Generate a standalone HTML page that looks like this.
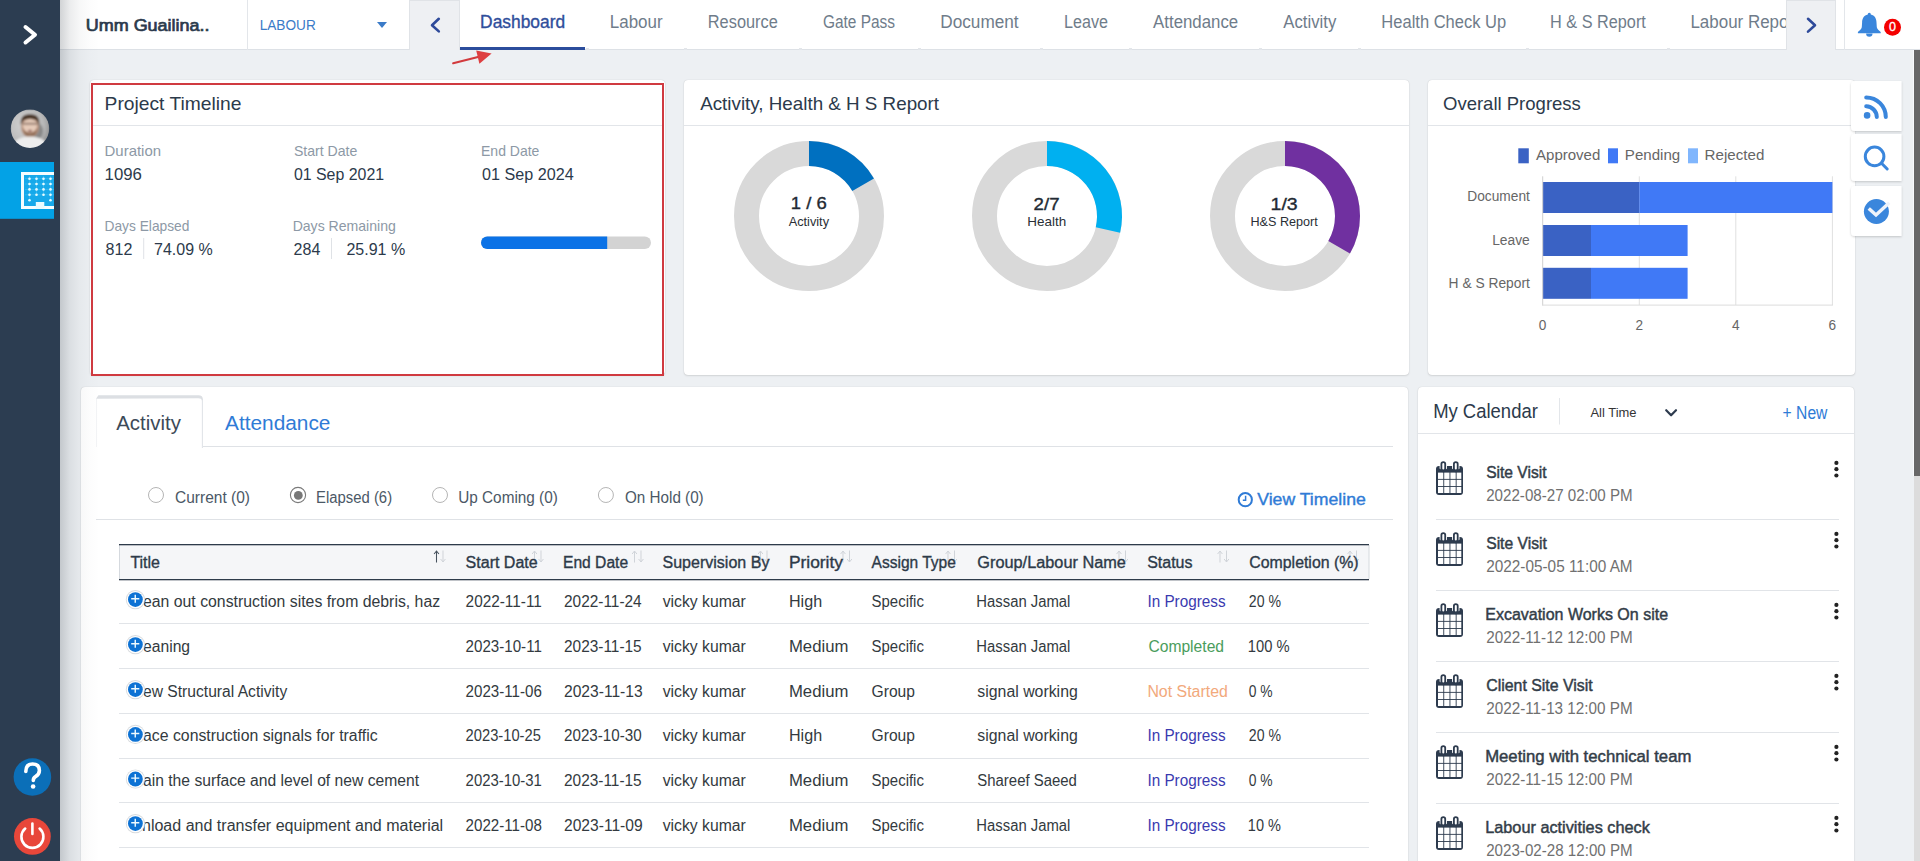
<!DOCTYPE html>
<html>
<head>
<meta charset="utf-8">
<title>Dashboard</title>
<style>
html,body{margin:0;padding:0;}
body{width:1920px;height:861px;overflow:hidden;background:#edf0f3;position:relative;font-family:"Liberation Sans",sans-serif;}
.a{position:absolute;box-sizing:border-box;}
.card{position:absolute;background:#fff;border-radius:4px;box-shadow:0 0 1px rgba(0,0,0,0.20),0 1px 2px rgba(0,0,0,0.10);}
svg{position:absolute;left:0;top:0;overflow:visible;}
svg text{font-family:"Liberation Sans",sans-serif;}
</style>
</head>
<body>
<!-- sidebar -->
<div class="a" style="left:0;top:0;width:60px;height:861px;background:#2c3d51;"></div>
<!-- left shadow over content -->
<div class="a" style="left:60px;top:0;width:40px;height:861px;background:linear-gradient(to right,rgba(40,50,60,0.21),rgba(40,50,60,0.09) 25%,rgba(40,50,60,0.035) 50%,rgba(40,50,60,0.012) 75%,rgba(40,50,60,0));z-index:5;"></div>

<!-- header -->
<div class="a" style="left:60px;top:0;width:1860px;height:50px;background:#fff;border-bottom:1px solid #dde1e6;"></div>
<div class="a" style="left:247px;top:0;width:1px;height:50px;background:#e3e6ea;"></div>
<div class="a" style="left:409px;top:0;width:51px;height:50px;background:#eef0f3;border:1px solid #e0e3e7;border-bottom:none;"></div>
<div class="a" style="left:460px;top:47px;width:125px;height:3px;background:#2b4d9c;"></div>
<div class="a" style="left:1844px;top:0;width:1px;height:50px;background:#e3e6ea;"></div>

<!-- top cards -->
<div class="card" style="left:90px;top:80px;width:575px;height:295px;"></div>
<div class="a" style="left:93px;top:125px;width:570px;height:1px;background:#e2e5e9;"></div>
<div class="card" style="left:684px;top:80px;width:725px;height:295px;"></div>
<div class="a" style="left:684px;top:125px;width:725px;height:1px;background:#e2e5e9;"></div>
<div class="card" style="left:1428px;top:80px;width:427px;height:295px;"></div>
<div class="a" style="left:1428px;top:125px;width:427px;height:1px;background:#e2e5e9;"></div>

<!-- bottom cards -->
<div class="card" style="left:81px;top:387px;width:1327px;height:500px;"></div>
<div class="card" style="left:1418px;top:387px;width:436px;height:500px;"></div>
<div class="a" style="left:1418px;top:433px;width:436px;height:1px;background:#e2e5e9;"></div>

<!-- ===== graphics layer ===== -->
<svg width="1920" height="861" viewBox="0 0 1920 861" style="z-index:2">
  <!-- sidebar chevron -->
  <polyline points="25.5,27 35,34.7 25.5,42.5" fill="none" stroke="#fff" stroke-width="4" stroke-linecap="round" stroke-linejoin="round"/>
  <!-- avatar -->
  <defs>
    <radialGradient id="avbg" cx="35%" cy="40%" r="70%">
      <stop offset="0" stop-color="#d2d2d2"/><stop offset="0.7" stop-color="#b9b9b9"/><stop offset="1" stop-color="#8d8d8d"/>
    </radialGradient>
    <filter id="bblur" x="-10%" y="-10%" width="120%" height="120%"><feGaussianBlur stdDeviation="0.45"/></filter>
    <filter id="avblur" x="-10%" y="-10%" width="120%" height="120%"><feGaussianBlur stdDeviation="0.85"/></filter>
    <clipPath id="avclip"><circle cx="30" cy="128.7" r="19.2"/></clipPath>
  </defs>
  <g clip-path="url(#avclip)">
    <g filter="url(#avblur)">
    <rect x="10" y="109" width="40" height="40" fill="url(#avbg)"/>
    <ellipse cx="37" cy="131" rx="6" ry="8" fill="#555" opacity="0.5"/>
    <ellipse cx="30" cy="127" rx="9" ry="10.5" fill="#b8927c"/>
    <ellipse cx="30" cy="125.5" rx="7.2" ry="7" fill="#e6cbb9"/>
    <path d="M20.8,125 Q19.8,113.8 30,114.2 Q40.2,113.8 39.2,125 Q38,118.6 30,118.9 Q22,118.6 20.8,125Z" fill="#4a3628"/>
    <path d="M22.8,128 Q23.5,136.5 30,137 Q36.5,136.5 37.2,128 Q35,132.5 30,132.8 Q25,132.5 22.8,128Z" fill="#8a6650" opacity="0.8"/>
    <rect x="22.5" y="122.6" width="15" height="2.4" fill="#6f5a4e" opacity="0.55"/>
    <ellipse cx="30" cy="130.8" rx="2.2" ry="1" fill="#6a3030" opacity="0.7"/>
    <ellipse cx="30" cy="151" rx="20" ry="14.5" fill="#ededed"/>
    </g>
  </g>
  <!-- active module -->
  <rect x="0" y="162" width="54" height="56.8" fill="#03a2e6"/>
  <g filter="url(#bblur)">
    <rect x="24" y="175" width="30" height="32" fill="#13a9ea"/>
    <g stroke="#4fc2f1" stroke-width="0.7" opacity="0.8">
      <line x1="25" y1="178.7" x2="54" y2="178.7"/><line x1="25" y1="184" x2="54" y2="184"/><line x1="25" y1="189.4" x2="54" y2="189.4"/><line x1="25" y1="194.8" x2="54" y2="194.8"/>
      <line x1="29.5" y1="176" x2="29.5" y2="201"/><line x1="36.5" y1="176" x2="36.5" y2="196"/><line x1="43.5" y1="176" x2="43.5" y2="196"/><line x1="50.5" y1="176" x2="50.5" y2="201"/>
    </g>
    <rect x="22.5" y="173.5" width="33" height="34" fill="none" stroke="#f4fdff" stroke-width="3"/>
    <g fill="#e8fbff">
      <circle cx="29.5" cy="178.7" r="1.3"/><circle cx="36.5" cy="178.7" r="1.3"/><circle cx="43.5" cy="178.7" r="1.3"/><circle cx="50.5" cy="178.7" r="1.3"/>
      <circle cx="29.5" cy="184" r="1.3"/><circle cx="36.5" cy="184" r="1.3"/><circle cx="43.5" cy="184" r="1.3"/><circle cx="50.5" cy="184" r="1.3"/>
      <circle cx="29.5" cy="189.4" r="1.3"/><circle cx="36.5" cy="189.4" r="1.3"/><circle cx="43.5" cy="189.4" r="1.3"/><circle cx="50.5" cy="189.4" r="1.3"/>
      <circle cx="29.5" cy="194.8" r="1.3"/><circle cx="36.5" cy="194.8" r="1.3"/><circle cx="43.5" cy="194.8" r="1.3"/><circle cx="50.5" cy="194.8" r="1.3"/>
      <circle cx="29.5" cy="200.2" r="1.3"/><circle cx="50.5" cy="200.2" r="1.3"/>
      <rect x="35.8" y="202" width="8.5" height="7"/>
    </g>
  </g>
  <rect x="54" y="160" width="6" height="62" fill="#2c3d51"/>
  <!-- help -->
  <circle cx="32.4" cy="777" r="18.8" fill="#0b6fb8"/>
  <path d="M25.8,771.5 Q25.8,764 32.6,764 Q39.4,764 39.4,770.6 Q39.4,774.5 35.5,776.6 Q33.3,777.8 33.3,780.5" fill="none" stroke="#fff" stroke-width="3.6" stroke-linecap="round"/>
  <circle cx="33.1" cy="786.5" r="2.3" fill="#fff"/>
  <!-- power -->
  <circle cx="32.4" cy="836.4" r="18.4" fill="#e8473a"/>
  <path d="M25.2,828.6 A11,11 0 1 0 39.6,828.6" fill="none" stroke="#fff" stroke-width="2.6" stroke-linecap="round"/>
  <line x1="32.4" y1="823.5" x2="32.4" y2="834" stroke="#fff" stroke-width="2.6" stroke-linecap="round"/>

  <!-- header icons -->
  <path d="M377,22 L387,22 L382,28 Z" fill="#3b7bc8"/>
  <polyline points="438.8,18.8 432,25.2 438.8,31.4" fill="none" stroke="#2e4a9a" stroke-width="2.6" stroke-linecap="round" stroke-linejoin="round"/>
  <!-- tab ticks -->
  <g fill="#e3e6ea">
    <rect x="586" y="48" width="3" height="2"/><rect x="684" y="48" width="3" height="2"/><rect x="799" y="48" width="3" height="2"/>
    <rect x="918" y="48" width="3" height="2"/><rect x="1040" y="48" width="3" height="2"/><rect x="1129" y="48" width="3" height="2"/>
    <rect x="1259" y="48" width="3" height="2"/><rect x="1358" y="48" width="3" height="2"/><rect x="1526" y="48" width="3" height="2"/>
    <rect x="1667" y="48" width="3" height="2"/>
  </g>

  <!-- red annotation arrow -->
  <line x1="453.2" y1="63.2" x2="478" y2="57" stroke="#d23a3d" stroke-width="2.2" stroke-linecap="round"/>
  <path d="M476.2,50.5 L491.6,53.6 L479.4,63.7 Z" fill="#de3f41"/>

  <!-- card1 progress -->
  <rect x="481" y="236.5" width="170" height="12.5" rx="6.25" fill="#d3d3d3"/>
  <path d="M487.25,236.5 L607.2,236.5 L607.2,249 L487.25,249 A6.25,6.25 0 0 1 487.25,236.5Z" fill="#0b72e6"/>
  <rect x="143.2" y="238" width="1" height="21" fill="#dfe2e6"/>
  <rect x="331" y="238" width="1" height="21" fill="#dfe2e6"/>

  <!-- donuts -->
  <g fill="none" stroke-width="25">
    <circle cx="809" cy="216" r="62.5" stroke="#d9d9d9"/>
    <path d="M809,153.5 A62.5,62.5 0 0 1 863.13,184.75" stroke="#0070c0"/>
    <circle cx="1047" cy="216" r="62.5" stroke="#d9d9d9"/>
    <path d="M1047,153.5 A62.5,62.5 0 0 1 1107.93,229.91" stroke="#00b0f0"/>
    <circle cx="1285" cy="216" r="62.5" stroke="#d9d9d9"/>
    <path d="M1285,153.5 A62.5,62.5 0 0 1 1339.13,247.25" stroke="#7030a0"/>
  </g>

  <!-- overall progress chart -->
  <rect x="1518.3" y="148.3" width="10.5" height="15" fill="#3a62c4"/>
  <rect x="1608" y="148.3" width="10" height="15" fill="#4079f6"/>
  <rect x="1688" y="148.3" width="10" height="15" fill="#80b6fd"/>
  <g stroke="#e0e0e0" stroke-width="1">
    <line x1="1639.3" y1="176.3" x2="1639.3" y2="305"/>
    <line x1="1735.8" y1="176.3" x2="1735.8" y2="305"/>
    <line x1="1832.4" y1="176.3" x2="1832.4" y2="305"/>
  </g>
  <rect x="1542.7" y="182" width="96.6" height="31" fill="#3a62c4"/>
  <rect x="1639.3" y="182" width="193.1" height="31" fill="#4079f6"/>
  <rect x="1542.7" y="225" width="48.3" height="31" fill="#3a62c4"/>
  <rect x="1591" y="225" width="96.6" height="31" fill="#4079f6"/>
  <rect x="1542.7" y="267.8" width="48.3" height="31" fill="#3a62c4"/>
  <rect x="1591" y="267.8" width="96.6" height="31" fill="#4079f6"/>
  <line x1="1542.7" y1="176.3" x2="1542.7" y2="305.5" stroke="#cfcfcf" stroke-width="1"/>
  <line x1="1542.2" y1="305.1" x2="1833" y2="305.1" stroke="#dcdcdc" stroke-width="1"/>

  <!-- card4 tabs -->
  <line x1="96.5" y1="399" x2="96.5" y2="447" stroke="#f3f4f6" stroke-width="1"/>
  <line x1="202.4" y1="399" x2="202.4" y2="448" stroke="#e1e4e8" stroke-width="1.1"/>
  <path d="M96,398.7 L98.4,395.2 L198.4,395.2 Q202.9,395.2 202.9,399.5 L201.9,400.5 Q201.5,398.3 198.4,398.3 L96,398.7 Z" fill="#dcdfe3"/>
  <rect x="203" y="446" width="1190" height="1" fill="#dfe2e6"/>
  <rect x="96" y="519" width="1297" height="1" fill="#dfe2e6"/>
  <!-- radios -->
  <g fill="#fff" stroke="#b5b5b5" stroke-width="1">
    <circle cx="156" cy="495" r="7.5"/>
    <circle cx="298" cy="495" r="7.6" stroke="#7a7a7a" stroke-width="1.1"/>
    <circle cx="440" cy="495" r="7.5"/>
    <circle cx="605.9" cy="495" r="7.5"/>
  </g>
  <circle cx="298.3" cy="495.4" r="4.4" fill="#777"/>
  <!-- clock -->
  <circle cx="1245.3" cy="499.7" r="6.6" fill="none" stroke="#2f7bd6" stroke-width="2"/>
  <polyline points="1245.6,495.8 1245.6,500.2 1242.8,500.2" fill="none" stroke="#2f7bd6" stroke-width="1.5"/>

  <!-- table header -->
  <rect x="119" y="545" width="1250" height="34" fill="#f5f6f8"/>
  <rect x="119" y="545" width="1" height="34" fill="#d5d9de"/>
  <rect x="1368.5" y="545" width="1" height="34" fill="#d5d9de"/>
  <rect x="119" y="544" width="1250" height="1.3" fill="#2e3b4a"/>
  <rect x="119" y="579" width="1250" height="1.3" fill="#2e3b4a"/>
  <!-- row lines -->
  <g fill="#e1e4e8">
    <rect x="119" y="623" width="1250" height="1"/>
    <rect x="119" y="668" width="1250" height="1"/>
    <rect x="119" y="713" width="1250" height="1"/>
    <rect x="119" y="758" width="1250" height="1"/>
    <rect x="119" y="802" width="1250" height="1"/>
    <rect x="119" y="847" width="1250" height="1"/>
  </g>

  <!-- calendar header -->
  <rect x="1559" y="398" width="1" height="26.5" fill="#e3e6ea"/>
  <polyline points="1666.2,410.2 1671.1,415.3 1676,410.2" fill="none" stroke="#2d3b4e" stroke-width="2.2" stroke-linecap="round" stroke-linejoin="round"/>
  <g fill="#e1e4e8">
    <rect x="1436" y="519" width="403" height="1"/>
    <rect x="1436" y="590" width="403" height="1"/>
    <rect x="1436" y="661" width="403" height="1"/>
    <rect x="1436" y="732" width="403" height="1"/>
    <rect x="1436" y="803" width="403" height="1"/>
  </g>
  <defs>
    <g id="calic">
      <rect x="0" y="5" width="27" height="29" rx="3" fill="#2d3b4e"/>
      <g fill="#fff">
        <rect x="2" y="11.6" width="5.3" height="6.3"/><rect x="8.2" y="11.6" width="5.3" height="6.3"/><rect x="14.4" y="11.6" width="5.3" height="6.3"/><rect x="20.6" y="11.6" width="4.7" height="6.3"/>
        <rect x="2" y="18.8" width="5.3" height="6.3"/><rect x="8.2" y="18.8" width="5.3" height="6.3"/><rect x="14.4" y="18.8" width="5.3" height="6.3"/><rect x="20.6" y="18.8" width="4.7" height="6.3"/>
        <rect x="2" y="26" width="5.3" height="6"/><rect x="8.2" y="26" width="5.3" height="6"/><rect x="14.4" y="26" width="5.3" height="6"/><rect x="20.6" y="26" width="4.7" height="6"/>
      </g>
      <rect x="3.6" y="4" width="7.4" height="4.2" rx="1" fill="#fff"/>
      <rect x="16.1" y="4" width="7.4" height="4.2" rx="1" fill="#fff"/>
      <rect x="4.5" y="0.3" width="5.6" height="11" rx="2.8" fill="#2d3b4e"/>
      <rect x="6.3" y="2" width="2" height="6.6" rx="1" fill="#fff"/>
      <rect x="17" y="0.3" width="5.6" height="11" rx="2.8" fill="#2d3b4e"/>
      <rect x="18.8" y="2" width="2" height="6.6" rx="1" fill="#fff"/>
    </g>
    <g id="kebab" fill="#222">
      <circle cx="0" cy="0.3" r="2.1"/><circle cx="0" cy="6.6" r="2.1"/><circle cx="0" cy="12.9" r="2.1"/>
    </g>
  </defs>
  <g transform="translate(1436,461)">
      <rect x="0" y="5" width="27" height="29" rx="3" fill="#2d3b4e"/>
      <g fill="#fff">
        <rect x="2" y="11.6" width="5.3" height="6.3"/><rect x="8.2" y="11.6" width="5.3" height="6.3"/><rect x="14.4" y="11.6" width="5.3" height="6.3"/><rect x="20.6" y="11.6" width="4.7" height="6.3"/>
        <rect x="2" y="18.8" width="5.3" height="6.3"/><rect x="8.2" y="18.8" width="5.3" height="6.3"/><rect x="14.4" y="18.8" width="5.3" height="6.3"/><rect x="20.6" y="18.8" width="4.7" height="6.3"/>
        <rect x="2" y="26" width="5.3" height="6"/><rect x="8.2" y="26" width="5.3" height="6"/><rect x="14.4" y="26" width="5.3" height="6"/><rect x="20.6" y="26" width="4.7" height="6"/>
      </g>
      <rect x="3.6" y="4" width="7.4" height="4.2" rx="1" fill="#fff"/>
      <rect x="16.1" y="4" width="7.4" height="4.2" rx="1" fill="#fff"/>
      <rect x="4.5" y="0.3" width="5.6" height="11" rx="2.8" fill="#2d3b4e"/>
      <rect x="6.3" y="2" width="2" height="6.6" rx="1" fill="#fff"/>
      <rect x="17" y="0.3" width="5.6" height="11" rx="2.8" fill="#2d3b4e"/>
      <rect x="18.8" y="2" width="2" height="6.6" rx="1" fill="#fff"/>
    </g>
  <g transform="translate(1436,532)">
      <rect x="0" y="5" width="27" height="29" rx="3" fill="#2d3b4e"/>
      <g fill="#fff">
        <rect x="2" y="11.6" width="5.3" height="6.3"/><rect x="8.2" y="11.6" width="5.3" height="6.3"/><rect x="14.4" y="11.6" width="5.3" height="6.3"/><rect x="20.6" y="11.6" width="4.7" height="6.3"/>
        <rect x="2" y="18.8" width="5.3" height="6.3"/><rect x="8.2" y="18.8" width="5.3" height="6.3"/><rect x="14.4" y="18.8" width="5.3" height="6.3"/><rect x="20.6" y="18.8" width="4.7" height="6.3"/>
        <rect x="2" y="26" width="5.3" height="6"/><rect x="8.2" y="26" width="5.3" height="6"/><rect x="14.4" y="26" width="5.3" height="6"/><rect x="20.6" y="26" width="4.7" height="6"/>
      </g>
      <rect x="3.6" y="4" width="7.4" height="4.2" rx="1" fill="#fff"/>
      <rect x="16.1" y="4" width="7.4" height="4.2" rx="1" fill="#fff"/>
      <rect x="4.5" y="0.3" width="5.6" height="11" rx="2.8" fill="#2d3b4e"/>
      <rect x="6.3" y="2" width="2" height="6.6" rx="1" fill="#fff"/>
      <rect x="17" y="0.3" width="5.6" height="11" rx="2.8" fill="#2d3b4e"/>
      <rect x="18.8" y="2" width="2" height="6.6" rx="1" fill="#fff"/>
    </g>
  <g transform="translate(1436,603)">
      <rect x="0" y="5" width="27" height="29" rx="3" fill="#2d3b4e"/>
      <g fill="#fff">
        <rect x="2" y="11.6" width="5.3" height="6.3"/><rect x="8.2" y="11.6" width="5.3" height="6.3"/><rect x="14.4" y="11.6" width="5.3" height="6.3"/><rect x="20.6" y="11.6" width="4.7" height="6.3"/>
        <rect x="2" y="18.8" width="5.3" height="6.3"/><rect x="8.2" y="18.8" width="5.3" height="6.3"/><rect x="14.4" y="18.8" width="5.3" height="6.3"/><rect x="20.6" y="18.8" width="4.7" height="6.3"/>
        <rect x="2" y="26" width="5.3" height="6"/><rect x="8.2" y="26" width="5.3" height="6"/><rect x="14.4" y="26" width="5.3" height="6"/><rect x="20.6" y="26" width="4.7" height="6"/>
      </g>
      <rect x="3.6" y="4" width="7.4" height="4.2" rx="1" fill="#fff"/>
      <rect x="16.1" y="4" width="7.4" height="4.2" rx="1" fill="#fff"/>
      <rect x="4.5" y="0.3" width="5.6" height="11" rx="2.8" fill="#2d3b4e"/>
      <rect x="6.3" y="2" width="2" height="6.6" rx="1" fill="#fff"/>
      <rect x="17" y="0.3" width="5.6" height="11" rx="2.8" fill="#2d3b4e"/>
      <rect x="18.8" y="2" width="2" height="6.6" rx="1" fill="#fff"/>
    </g>
  <g transform="translate(1436,674)">
      <rect x="0" y="5" width="27" height="29" rx="3" fill="#2d3b4e"/>
      <g fill="#fff">
        <rect x="2" y="11.6" width="5.3" height="6.3"/><rect x="8.2" y="11.6" width="5.3" height="6.3"/><rect x="14.4" y="11.6" width="5.3" height="6.3"/><rect x="20.6" y="11.6" width="4.7" height="6.3"/>
        <rect x="2" y="18.8" width="5.3" height="6.3"/><rect x="8.2" y="18.8" width="5.3" height="6.3"/><rect x="14.4" y="18.8" width="5.3" height="6.3"/><rect x="20.6" y="18.8" width="4.7" height="6.3"/>
        <rect x="2" y="26" width="5.3" height="6"/><rect x="8.2" y="26" width="5.3" height="6"/><rect x="14.4" y="26" width="5.3" height="6"/><rect x="20.6" y="26" width="4.7" height="6"/>
      </g>
      <rect x="3.6" y="4" width="7.4" height="4.2" rx="1" fill="#fff"/>
      <rect x="16.1" y="4" width="7.4" height="4.2" rx="1" fill="#fff"/>
      <rect x="4.5" y="0.3" width="5.6" height="11" rx="2.8" fill="#2d3b4e"/>
      <rect x="6.3" y="2" width="2" height="6.6" rx="1" fill="#fff"/>
      <rect x="17" y="0.3" width="5.6" height="11" rx="2.8" fill="#2d3b4e"/>
      <rect x="18.8" y="2" width="2" height="6.6" rx="1" fill="#fff"/>
    </g>
  <g transform="translate(1436,745)">
      <rect x="0" y="5" width="27" height="29" rx="3" fill="#2d3b4e"/>
      <g fill="#fff">
        <rect x="2" y="11.6" width="5.3" height="6.3"/><rect x="8.2" y="11.6" width="5.3" height="6.3"/><rect x="14.4" y="11.6" width="5.3" height="6.3"/><rect x="20.6" y="11.6" width="4.7" height="6.3"/>
        <rect x="2" y="18.8" width="5.3" height="6.3"/><rect x="8.2" y="18.8" width="5.3" height="6.3"/><rect x="14.4" y="18.8" width="5.3" height="6.3"/><rect x="20.6" y="18.8" width="4.7" height="6.3"/>
        <rect x="2" y="26" width="5.3" height="6"/><rect x="8.2" y="26" width="5.3" height="6"/><rect x="14.4" y="26" width="5.3" height="6"/><rect x="20.6" y="26" width="4.7" height="6"/>
      </g>
      <rect x="3.6" y="4" width="7.4" height="4.2" rx="1" fill="#fff"/>
      <rect x="16.1" y="4" width="7.4" height="4.2" rx="1" fill="#fff"/>
      <rect x="4.5" y="0.3" width="5.6" height="11" rx="2.8" fill="#2d3b4e"/>
      <rect x="6.3" y="2" width="2" height="6.6" rx="1" fill="#fff"/>
      <rect x="17" y="0.3" width="5.6" height="11" rx="2.8" fill="#2d3b4e"/>
      <rect x="18.8" y="2" width="2" height="6.6" rx="1" fill="#fff"/>
    </g>
  <g transform="translate(1436,816)">
      <rect x="0" y="5" width="27" height="29" rx="3" fill="#2d3b4e"/>
      <g fill="#fff">
        <rect x="2" y="11.6" width="5.3" height="6.3"/><rect x="8.2" y="11.6" width="5.3" height="6.3"/><rect x="14.4" y="11.6" width="5.3" height="6.3"/><rect x="20.6" y="11.6" width="4.7" height="6.3"/>
        <rect x="2" y="18.8" width="5.3" height="6.3"/><rect x="8.2" y="18.8" width="5.3" height="6.3"/><rect x="14.4" y="18.8" width="5.3" height="6.3"/><rect x="20.6" y="18.8" width="4.7" height="6.3"/>
        <rect x="2" y="26" width="5.3" height="6"/><rect x="8.2" y="26" width="5.3" height="6"/><rect x="14.4" y="26" width="5.3" height="6"/><rect x="20.6" y="26" width="4.7" height="6"/>
      </g>
      <rect x="3.6" y="4" width="7.4" height="4.2" rx="1" fill="#fff"/>
      <rect x="16.1" y="4" width="7.4" height="4.2" rx="1" fill="#fff"/>
      <rect x="4.5" y="0.3" width="5.6" height="11" rx="2.8" fill="#2d3b4e"/>
      <rect x="6.3" y="2" width="2" height="6.6" rx="1" fill="#fff"/>
      <rect x="17" y="0.3" width="5.6" height="11" rx="2.8" fill="#2d3b4e"/>
      <rect x="18.8" y="2" width="2" height="6.6" rx="1" fill="#fff"/>
    </g>
  <g transform="translate(1836.4,462.6)" fill="#222">
      <circle cx="0" cy="0.3" r="2.1"/><circle cx="0" cy="6.6" r="2.1"/><circle cx="0" cy="12.9" r="2.1"/>
    </g>
  <g transform="translate(1836.4,533.6)" fill="#222">
      <circle cx="0" cy="0.3" r="2.1"/><circle cx="0" cy="6.6" r="2.1"/><circle cx="0" cy="12.9" r="2.1"/>
    </g>
  <g transform="translate(1836.4,604.6)" fill="#222">
      <circle cx="0" cy="0.3" r="2.1"/><circle cx="0" cy="6.6" r="2.1"/><circle cx="0" cy="12.9" r="2.1"/>
    </g>
  <g transform="translate(1836.4,675.6)" fill="#222">
      <circle cx="0" cy="0.3" r="2.1"/><circle cx="0" cy="6.6" r="2.1"/><circle cx="0" cy="12.9" r="2.1"/>
    </g>
  <g transform="translate(1836.4,746.6)" fill="#222">
      <circle cx="0" cy="0.3" r="2.1"/><circle cx="0" cy="6.6" r="2.1"/><circle cx="0" cy="12.9" r="2.1"/>
    </g>
  <g transform="translate(1836.4,817.6)" fill="#222">
      <circle cx="0" cy="0.3" r="2.1"/><circle cx="0" cy="6.6" r="2.1"/><circle cx="0" cy="12.9" r="2.1"/>
    </g>

  <!-- sort arrows -->
  <defs>
    <g id="sorta">
      <path d="M3,12.5 L3,1.5 M0.6,4 L3,1 L5.4,4" fill="none" stroke="#cdd2d7" stroke-width="0.95"/>
      <path d="M9.5,0.5 L9.5,11.5 M7.1,9 L9.5,12 L11.9,9" fill="none" stroke="#cdd2d7" stroke-width="0.95"/>
    </g>
    <g id="sortt">
      <path d="M3,12.5 L3,1.5 M0.6,4 L3,1 L5.4,4" fill="none" stroke="#46515d" stroke-width="1.05"/>
      <path d="M9.5,0.5 L9.5,11.5 M7.1,9 L9.5,12 L11.9,9" fill="none" stroke="#cdd2d7" stroke-width="0.95"/>
    </g>
  </defs>
  <g transform="translate(433.5,550)">
      <path d="M3,12.5 L3,1.5 M0.6,4 L3,1 L5.4,4" fill="none" stroke="#46515d" stroke-width="1.05"/>
      <path d="M9.5,0.5 L9.5,11.5 M7.1,9 L9.5,12 L11.9,9" fill="none" stroke="#cdd2d7" stroke-width="0.95"/>
    </g>
  <g transform="translate(531.5,550)">
      <path d="M3,12.5 L3,1.5 M0.6,4 L3,1 L5.4,4" fill="none" stroke="#cdd2d7" stroke-width="0.95"/>
      <path d="M9.5,0.5 L9.5,11.5 M7.1,9 L9.5,12 L11.9,9" fill="none" stroke="#cdd2d7" stroke-width="0.95"/>
    </g>
  <g transform="translate(631.5,550)">
      <path d="M3,12.5 L3,1.5 M0.6,4 L3,1 L5.4,4" fill="none" stroke="#cdd2d7" stroke-width="0.95"/>
      <path d="M9.5,0.5 L9.5,11.5 M7.1,9 L9.5,12 L11.9,9" fill="none" stroke="#cdd2d7" stroke-width="0.95"/>
    </g>
  <g transform="translate(757.5,550)">
      <path d="M3,12.5 L3,1.5 M0.6,4 L3,1 L5.4,4" fill="none" stroke="#cdd2d7" stroke-width="0.95"/>
      <path d="M9.5,0.5 L9.5,11.5 M7.1,9 L9.5,12 L11.9,9" fill="none" stroke="#cdd2d7" stroke-width="0.95"/>
    </g>
  <g transform="translate(840,550)">
      <path d="M3,12.5 L3,1.5 M0.6,4 L3,1 L5.4,4" fill="none" stroke="#cdd2d7" stroke-width="0.95"/>
      <path d="M9.5,0.5 L9.5,11.5 M7.1,9 L9.5,12 L11.9,9" fill="none" stroke="#cdd2d7" stroke-width="0.95"/>
    </g>
  <g transform="translate(945,550)">
      <path d="M3,12.5 L3,1.5 M0.6,4 L3,1 L5.4,4" fill="none" stroke="#cdd2d7" stroke-width="0.95"/>
      <path d="M9.5,0.5 L9.5,11.5 M7.1,9 L9.5,12 L11.9,9" fill="none" stroke="#cdd2d7" stroke-width="0.95"/>
    </g>
  <g transform="translate(1116,550)">
      <path d="M3,12.5 L3,1.5 M0.6,4 L3,1 L5.4,4" fill="none" stroke="#cdd2d7" stroke-width="0.95"/>
      <path d="M9.5,0.5 L9.5,11.5 M7.1,9 L9.5,12 L11.9,9" fill="none" stroke="#cdd2d7" stroke-width="0.95"/>
    </g>
  <g transform="translate(1217,550)">
      <path d="M3,12.5 L3,1.5 M0.6,4 L3,1 L5.4,4" fill="none" stroke="#cdd2d7" stroke-width="0.95"/>
      <path d="M9.5,0.5 L9.5,11.5 M7.1,9 L9.5,12 L11.9,9" fill="none" stroke="#cdd2d7" stroke-width="0.95"/>
    </g>
  <g transform="translate(1347,550)">
      <path d="M3,12.5 L3,1.5 M0.6,4 L3,1 L5.4,4" fill="none" stroke="#cdd2d7" stroke-width="0.95"/>
      <path d="M9.5,0.5 L9.5,11.5 M7.1,9 L9.5,12 L11.9,9" fill="none" stroke="#cdd2d7" stroke-width="0.95"/>
    </g>
</svg>

<!-- ===== text layer ===== -->
<svg width="1920" height="861" viewBox="0 0 1920 861" style="z-index:3">
<text x="85.84" y="30.60" font-size="17" fill="#2b3a4c" textLength="123.62" lengthAdjust="spacingAndGlyphs" stroke="#2b3a4c" stroke-width="0.7">Umm Guailina..</text>
<text x="259.66" y="30.00" font-size="14.5" fill="#3b7bc8" textLength="56.08" lengthAdjust="spacingAndGlyphs" >LABOUR</text>
<text x="480.11" y="28.10" font-size="17.5" fill="#2f4e9b" textLength="85.02" lengthAdjust="spacingAndGlyphs" stroke="#2f4e9b" stroke-width="0.35">Dashboard</text>
<text x="609.83" y="28.10" font-size="17.5" fill="#6f7c8a" textLength="52.80" lengthAdjust="spacingAndGlyphs" >Labour</text>
<text x="707.82" y="28.10" font-size="17.5" fill="#6f7c8a" textLength="69.97" lengthAdjust="spacingAndGlyphs" >Resource</text>
<text x="822.90" y="28.10" font-size="17.5" fill="#6f7c8a" textLength="72.08" lengthAdjust="spacingAndGlyphs" >Gate Pass</text>
<text x="940.27" y="28.10" font-size="17.5" fill="#6f7c8a" textLength="78.35" lengthAdjust="spacingAndGlyphs" >Document</text>
<text x="1064.08" y="28.10" font-size="17.5" fill="#6f7c8a" textLength="43.90" lengthAdjust="spacingAndGlyphs" >Leave</text>
<text x="1153.10" y="28.10" font-size="17.5" fill="#6f7c8a" textLength="85.10" lengthAdjust="spacingAndGlyphs" >Attendance</text>
<text x="1283.30" y="28.10" font-size="17.5" fill="#6f7c8a" textLength="52.96" lengthAdjust="spacingAndGlyphs" >Activity</text>
<text x="1381.36" y="28.10" font-size="17.5" fill="#6f7c8a" textLength="124.84" lengthAdjust="spacingAndGlyphs" >Health Check Up</text>
<text x="1550.07" y="28.10" font-size="17.5" fill="#6f7c8a" textLength="95.80" lengthAdjust="spacingAndGlyphs" >H &amp; S Report</text>
<text x="1690.43" y="28.10" font-size="17.5" fill="#6f7c8a" textLength="108.41" lengthAdjust="spacingAndGlyphs" >Labour Report</text>
<text x="104.56" y="109.70" font-size="18.5" fill="#2c3a4b" textLength="136.94" lengthAdjust="spacingAndGlyphs" >Project Timeline</text>
<text x="104.57" y="156.00" font-size="14.5" fill="#8d99a6" textLength="56.50" lengthAdjust="spacingAndGlyphs" >Duration</text>
<text x="104.60" y="179.50" font-size="16.8" fill="#2c3a4b" textLength="37.33" lengthAdjust="spacingAndGlyphs" >1096</text>
<text x="293.90" y="156.00" font-size="14.5" fill="#8d99a6" textLength="63.36" lengthAdjust="spacingAndGlyphs" >Start Date</text>
<text x="293.90" y="179.50" font-size="16.8" fill="#2c3a4b" textLength="90.22" lengthAdjust="spacingAndGlyphs" >01 Sep 2021</text>
<text x="481.04" y="156.00" font-size="14.5" fill="#8d99a6" textLength="58.33" lengthAdjust="spacingAndGlyphs" >End Date</text>
<text x="482.00" y="179.50" font-size="16.8" fill="#2c3a4b" textLength="91.62" lengthAdjust="spacingAndGlyphs" >01 Sep 2024</text>
<text x="104.55" y="231.00" font-size="14.5" fill="#8d99a6" textLength="84.81" lengthAdjust="spacingAndGlyphs" >Days Elapsed</text>
<text x="105.50" y="254.60" font-size="16.8" fill="#2c3a4b" textLength="26.82" lengthAdjust="spacingAndGlyphs" >812</text>
<text x="154.00" y="254.60" font-size="16.8" fill="#2c3a4b" textLength="58.72" lengthAdjust="spacingAndGlyphs" >74.09 %</text>
<text x="292.63" y="231.00" font-size="14.5" fill="#8d99a6" textLength="103.23" lengthAdjust="spacingAndGlyphs" >Days Remaining</text>
<text x="293.60" y="254.60" font-size="16.8" fill="#2c3a4b" textLength="26.72" lengthAdjust="spacingAndGlyphs" >284</text>
<text x="346.40" y="254.60" font-size="16.8" fill="#2c3a4b" textLength="58.82" lengthAdjust="spacingAndGlyphs" >25.91 %</text>
<text x="700.20" y="110.05" font-size="18.5" fill="#2c3a4b" textLength="238.84" lengthAdjust="spacingAndGlyphs" >Activity, Health &amp; H S Report</text>
<text x="790.88" y="209.30" font-size="16.5" fill="#222a33" textLength="35.92" lengthAdjust="spacingAndGlyphs" stroke="#222a33" stroke-width="0.35">1 / 6</text>
<text x="788.70" y="226.00" font-size="13" fill="#2a2f36" textLength="40.31" lengthAdjust="spacingAndGlyphs" >Activity</text>
<text x="1033.60" y="209.75" font-size="16.5" fill="#222a33" textLength="25.90" lengthAdjust="spacingAndGlyphs" stroke="#222a33" stroke-width="0.35">2/7</text>
<text x="1027.27" y="225.70" font-size="13" fill="#2a2f36" textLength="38.87" lengthAdjust="spacingAndGlyphs" >Health</text>
<text x="1270.62" y="209.75" font-size="16.5" fill="#222a33" textLength="27.09" lengthAdjust="spacingAndGlyphs" stroke="#222a33" stroke-width="0.35">1/3</text>
<text x="1250.53" y="225.70" font-size="13" fill="#2a2f36" textLength="67.29" lengthAdjust="spacingAndGlyphs" >H&amp;S Report</text>
<text x="1443.00" y="109.80" font-size="18.5" fill="#2c3a4b" textLength="137.85" lengthAdjust="spacingAndGlyphs" >Overall Progress</text>
<text x="1536.00" y="159.80" font-size="15" fill="#666" textLength="64.34" lengthAdjust="spacingAndGlyphs" >Approved</text>
<text x="1624.89" y="159.80" font-size="15" fill="#666" textLength="55.35" lengthAdjust="spacingAndGlyphs" >Pending</text>
<text x="1704.59" y="159.80" font-size="15" fill="#666" textLength="59.75" lengthAdjust="spacingAndGlyphs" >Rejected</text>
<text x="1467.32" y="201.30" font-size="14" fill="#666" textLength="62.57" lengthAdjust="spacingAndGlyphs" >Document</text>
<text x="1492.21" y="244.50" font-size="14" fill="#666" textLength="37.57" lengthAdjust="spacingAndGlyphs" >Leave</text>
<text x="1448.61" y="287.80" font-size="14" fill="#666" textLength="81.28" lengthAdjust="spacingAndGlyphs" >H &amp; S Report</text>
<text x="1538.80" y="330.00" font-size="14" fill="#666" textLength="7.59" lengthAdjust="spacingAndGlyphs" >0</text>
<text x="1635.40" y="330.00" font-size="14" fill="#666" textLength="7.59" lengthAdjust="spacingAndGlyphs" >2</text>
<text x="1731.90" y="330.00" font-size="14" fill="#666" textLength="7.59" lengthAdjust="spacingAndGlyphs" >4</text>
<text x="1828.50" y="330.00" font-size="14" fill="#666" textLength="7.59" lengthAdjust="spacingAndGlyphs" >6</text>
<text x="116.25" y="430.00" font-size="20.5" fill="#3d4a58" textLength="64.60" lengthAdjust="spacingAndGlyphs" >Activity</text>
<text x="225.00" y="430.00" font-size="20.5" fill="#2f7bd6" textLength="105.41" lengthAdjust="spacingAndGlyphs" >Attendance</text>
<text x="175.00" y="502.60" font-size="15.6" fill="#4b5866" textLength="74.99" lengthAdjust="spacingAndGlyphs" >Current (0)</text>
<text x="316.05" y="502.60" font-size="15.6" fill="#4b5866" textLength="76.04" lengthAdjust="spacingAndGlyphs" >Elapsed (6)</text>
<text x="458.22" y="502.60" font-size="15.6" fill="#4b5866" textLength="99.57" lengthAdjust="spacingAndGlyphs" >Up Coming (0)</text>
<text x="625.00" y="502.60" font-size="15.6" fill="#4b5866" textLength="78.69" lengthAdjust="spacingAndGlyphs" >On Hold (0)</text>
<text x="1257.20" y="504.60" font-size="17.3" fill="#2f7bd6" textLength="108.62" lengthAdjust="spacingAndGlyphs" stroke="#2f7bd6" stroke-width="0.4">View Timeline</text>
<text x="130.40" y="568.00" font-size="16" fill="#2d3a48" textLength="29.60" lengthAdjust="spacingAndGlyphs" stroke="#2d3a48" stroke-width="0.35">Title</text>
<text x="465.60" y="568.00" font-size="16" fill="#2d3a48" textLength="72.10" lengthAdjust="spacingAndGlyphs" stroke="#2d3a48" stroke-width="0.35">Start Date</text>
<text x="563.02" y="568.00" font-size="16" fill="#2d3a48" textLength="65.08" lengthAdjust="spacingAndGlyphs" stroke="#2d3a48" stroke-width="0.35">End Date</text>
<text x="662.50" y="568.00" font-size="16" fill="#2d3a48" textLength="106.90" lengthAdjust="spacingAndGlyphs" stroke="#2d3a48" stroke-width="0.35">Supervision By</text>
<text x="788.91" y="568.00" font-size="16" fill="#2d3a48" textLength="54.09" lengthAdjust="spacingAndGlyphs" stroke="#2d3a48" stroke-width="0.35">Priority</text>
<text x="871.60" y="568.00" font-size="16" fill="#2d3a48" textLength="84.30" lengthAdjust="spacingAndGlyphs" stroke="#2d3a48" stroke-width="0.35">Assign Type</text>
<text x="977.30" y="568.00" font-size="16" fill="#2d3a48" textLength="148.60" lengthAdjust="spacingAndGlyphs" stroke="#2d3a48" stroke-width="0.35">Group/Labour Name</text>
<text x="1147.20" y="568.00" font-size="16" fill="#2d3a48" textLength="45.30" lengthAdjust="spacingAndGlyphs" stroke="#2d3a48" stroke-width="0.35">Status</text>
<text x="1249.30" y="568.00" font-size="16" fill="#2d3a48" textLength="109.33" lengthAdjust="spacingAndGlyphs" stroke="#2d3a48" stroke-width="0.35">Completion (%)</text>
<text x="143.00" y="606.75" font-size="15.6" fill="#333a40" textLength="297.09" lengthAdjust="spacingAndGlyphs" >ean out construction sites from debris, haz</text>
<text x="465.60" y="606.75" font-size="15.6" fill="#333a40" textLength="76.26" lengthAdjust="spacingAndGlyphs" >2022-11-11</text>
<text x="564.00" y="606.75" font-size="15.6" fill="#333a40" textLength="77.68" lengthAdjust="spacingAndGlyphs" >2022-11-24</text>
<text x="662.70" y="606.75" font-size="15.6" fill="#333a40" textLength="83.09" lengthAdjust="spacingAndGlyphs" >vicky kumar</text>
<text x="788.97" y="606.75" font-size="15.6" fill="#333a40" textLength="33.13" lengthAdjust="spacingAndGlyphs" >High</text>
<text x="871.60" y="606.75" font-size="15.6" fill="#333a40" textLength="52.31" lengthAdjust="spacingAndGlyphs" >Specific</text>
<text x="976.35" y="606.75" font-size="15.6" fill="#333a40" textLength="94.09" lengthAdjust="spacingAndGlyphs" >Hassan Jamal</text>
<text x="1147.42" y="606.75" font-size="15.6" fill="#3a3ab0" textLength="78.18" lengthAdjust="spacingAndGlyphs" >In Progress</text>
<text x="1248.80" y="606.75" font-size="15.6" fill="#333a40" textLength="32.18" lengthAdjust="spacingAndGlyphs" >20 %</text>
<text x="143.00" y="651.60" font-size="15.6" fill="#333a40" textLength="47.08" lengthAdjust="spacingAndGlyphs" >eaning</text>
<text x="465.60" y="651.60" font-size="15.6" fill="#333a40" textLength="76.25" lengthAdjust="spacingAndGlyphs" >2023-10-11</text>
<text x="564.00" y="651.60" font-size="15.6" fill="#333a40" textLength="77.68" lengthAdjust="spacingAndGlyphs" >2023-11-15</text>
<text x="662.70" y="651.60" font-size="15.6" fill="#333a40" textLength="83.09" lengthAdjust="spacingAndGlyphs" >vicky kumar</text>
<text x="788.93" y="651.60" font-size="15.6" fill="#333a40" textLength="59.43" lengthAdjust="spacingAndGlyphs" >Medium</text>
<text x="871.60" y="651.60" font-size="15.6" fill="#333a40" textLength="52.31" lengthAdjust="spacingAndGlyphs" >Specific</text>
<text x="976.35" y="651.60" font-size="15.6" fill="#333a40" textLength="94.09" lengthAdjust="spacingAndGlyphs" >Hassan Jamal</text>
<text x="1148.40" y="651.60" font-size="15.6" fill="#4a9d5c" textLength="75.67" lengthAdjust="spacingAndGlyphs" >Completed</text>
<text x="1247.85" y="651.60" font-size="15.6" fill="#333a40" textLength="41.82" lengthAdjust="spacingAndGlyphs" >100 %</text>
<text x="143.00" y="696.50" font-size="15.6" fill="#333a40" textLength="144.20" lengthAdjust="spacingAndGlyphs" >ew Structural Activity</text>
<text x="465.60" y="696.50" font-size="15.6" fill="#333a40" textLength="76.25" lengthAdjust="spacingAndGlyphs" >2023-11-06</text>
<text x="564.00" y="696.50" font-size="15.6" fill="#333a40" textLength="78.67" lengthAdjust="spacingAndGlyphs" >2023-11-13</text>
<text x="662.70" y="696.50" font-size="15.6" fill="#333a40" textLength="83.09" lengthAdjust="spacingAndGlyphs" >vicky kumar</text>
<text x="788.93" y="696.50" font-size="15.6" fill="#333a40" textLength="59.43" lengthAdjust="spacingAndGlyphs" >Medium</text>
<text x="871.60" y="696.50" font-size="15.6" fill="#333a40" textLength="43.37" lengthAdjust="spacingAndGlyphs" >Group</text>
<text x="977.30" y="696.50" font-size="15.6" fill="#333a40" textLength="100.48" lengthAdjust="spacingAndGlyphs" >signal working</text>
<text x="1147.38" y="696.50" font-size="15.6" fill="#f2a97c" textLength="80.51" lengthAdjust="spacingAndGlyphs" >Not Started</text>
<text x="1248.80" y="696.50" font-size="15.6" fill="#333a40" textLength="23.88" lengthAdjust="spacingAndGlyphs" >0 %</text>
<text x="143.00" y="741.40" font-size="15.6" fill="#333a40" textLength="234.59" lengthAdjust="spacingAndGlyphs" >ace construction signals for traffic</text>
<text x="465.60" y="741.40" font-size="15.6" fill="#333a40" textLength="75.29" lengthAdjust="spacingAndGlyphs" >2023-10-25</text>
<text x="564.00" y="741.40" font-size="15.6" fill="#333a40" textLength="77.68" lengthAdjust="spacingAndGlyphs" >2023-10-30</text>
<text x="662.70" y="741.40" font-size="15.6" fill="#333a40" textLength="83.09" lengthAdjust="spacingAndGlyphs" >vicky kumar</text>
<text x="788.97" y="741.40" font-size="15.6" fill="#333a40" textLength="33.13" lengthAdjust="spacingAndGlyphs" >High</text>
<text x="871.60" y="741.40" font-size="15.6" fill="#333a40" textLength="43.37" lengthAdjust="spacingAndGlyphs" >Group</text>
<text x="977.30" y="741.40" font-size="15.6" fill="#333a40" textLength="100.48" lengthAdjust="spacingAndGlyphs" >signal working</text>
<text x="1147.42" y="741.40" font-size="15.6" fill="#3a3ab0" textLength="78.18" lengthAdjust="spacingAndGlyphs" >In Progress</text>
<text x="1248.80" y="741.40" font-size="15.6" fill="#333a40" textLength="32.18" lengthAdjust="spacingAndGlyphs" >20 %</text>
<text x="143.00" y="786.00" font-size="15.6" fill="#333a40" textLength="276.03" lengthAdjust="spacingAndGlyphs" >ain the surface and level of new cement</text>
<text x="465.60" y="786.00" font-size="15.6" fill="#333a40" textLength="76.24" lengthAdjust="spacingAndGlyphs" >2023-10-31</text>
<text x="564.00" y="786.00" font-size="15.6" fill="#333a40" textLength="77.68" lengthAdjust="spacingAndGlyphs" >2023-11-15</text>
<text x="662.70" y="786.00" font-size="15.6" fill="#333a40" textLength="83.09" lengthAdjust="spacingAndGlyphs" >vicky kumar</text>
<text x="788.93" y="786.00" font-size="15.6" fill="#333a40" textLength="59.43" lengthAdjust="spacingAndGlyphs" >Medium</text>
<text x="871.60" y="786.00" font-size="15.6" fill="#333a40" textLength="52.31" lengthAdjust="spacingAndGlyphs" >Specific</text>
<text x="977.30" y="786.00" font-size="15.6" fill="#333a40" textLength="99.64" lengthAdjust="spacingAndGlyphs" >Shareef Saeed</text>
<text x="1147.42" y="786.00" font-size="15.6" fill="#3a3ab0" textLength="78.18" lengthAdjust="spacingAndGlyphs" >In Progress</text>
<text x="1248.80" y="786.00" font-size="15.6" fill="#333a40" textLength="23.88" lengthAdjust="spacingAndGlyphs" >0 %</text>
<text x="141.97" y="830.60" font-size="15.6" fill="#333a40" textLength="301.21" lengthAdjust="spacingAndGlyphs" >nload and transfer equipment and material</text>
<text x="465.60" y="830.60" font-size="15.6" fill="#333a40" textLength="76.25" lengthAdjust="spacingAndGlyphs" >2022-11-08</text>
<text x="564.00" y="830.60" font-size="15.6" fill="#333a40" textLength="78.67" lengthAdjust="spacingAndGlyphs" >2023-11-09</text>
<text x="662.70" y="830.60" font-size="15.6" fill="#333a40" textLength="83.09" lengthAdjust="spacingAndGlyphs" >vicky kumar</text>
<text x="788.93" y="830.60" font-size="15.6" fill="#333a40" textLength="59.43" lengthAdjust="spacingAndGlyphs" >Medium</text>
<text x="871.60" y="830.60" font-size="15.6" fill="#333a40" textLength="52.31" lengthAdjust="spacingAndGlyphs" >Specific</text>
<text x="976.35" y="830.60" font-size="15.6" fill="#333a40" textLength="94.09" lengthAdjust="spacingAndGlyphs" >Hassan Jamal</text>
<text x="1147.42" y="830.60" font-size="15.6" fill="#3a3ab0" textLength="78.18" lengthAdjust="spacingAndGlyphs" >In Progress</text>
<text x="1247.87" y="830.60" font-size="15.6" fill="#333a40" textLength="33.11" lengthAdjust="spacingAndGlyphs" >10 %</text>
<text x="1433.14" y="418.00" font-size="19.3" fill="#2c3a4b" textLength="104.70" lengthAdjust="spacingAndGlyphs" >My Calendar</text>
<text x="1590.50" y="417.00" font-size="13.5" fill="#333" textLength="45.98" lengthAdjust="spacingAndGlyphs" >All Time</text>
<text x="1782.60" y="419.40" font-size="18" fill="#2f7bd6" textLength="44.83" lengthAdjust="spacingAndGlyphs" >+ New</text>
<text x="1486.20" y="478.00" font-size="16.3" fill="#333d48" textLength="60.34" lengthAdjust="spacingAndGlyphs" stroke="#333d48" stroke-width="0.45">Site Visit</text>
<text x="1486.20" y="501.20" font-size="15.6" fill="#707070" textLength="146.46" lengthAdjust="spacingAndGlyphs" >2022-08-27 02:00 PM</text>
<text x="1486.20" y="549.00" font-size="16.3" fill="#333d48" textLength="60.64" lengthAdjust="spacingAndGlyphs" stroke="#333d48" stroke-width="0.45">Site Visit</text>
<text x="1486.20" y="572.20" font-size="15.6" fill="#707070" textLength="146.47" lengthAdjust="spacingAndGlyphs" >2022-05-05 11:00 AM</text>
<text x="1485.22" y="620.00" font-size="16.3" fill="#333d48" textLength="182.84" lengthAdjust="spacingAndGlyphs" stroke="#333d48" stroke-width="0.45">Excavation Works On site</text>
<text x="1486.20" y="643.20" font-size="15.6" fill="#707070" textLength="146.47" lengthAdjust="spacingAndGlyphs" >2022-11-12 12:00 PM</text>
<text x="1486.20" y="691.00" font-size="16.3" fill="#333d48" textLength="106.54" lengthAdjust="spacingAndGlyphs" stroke="#333d48" stroke-width="0.45">Client Site Visit</text>
<text x="1486.20" y="714.20" font-size="15.6" fill="#707070" textLength="146.47" lengthAdjust="spacingAndGlyphs" >2022-11-13 12:00 PM</text>
<text x="1485.17" y="762.00" font-size="16.3" fill="#333d48" textLength="206.20" lengthAdjust="spacingAndGlyphs" stroke="#333d48" stroke-width="0.45">Meeting with technical team</text>
<text x="1486.20" y="785.20" font-size="15.6" fill="#707070" textLength="146.47" lengthAdjust="spacingAndGlyphs" >2022-11-15 12:00 PM</text>
<text x="1485.20" y="833.00" font-size="16.3" fill="#333d48" textLength="164.64" lengthAdjust="spacingAndGlyphs" stroke="#333d48" stroke-width="0.45">Labour activities check</text>
<text x="1486.20" y="856.20" font-size="15.6" fill="#707070" textLength="146.46" lengthAdjust="spacingAndGlyphs" >2023-02-28 12:00 PM</text>
</svg>

<!-- ===== top layer ===== -->
<div class="a" style="left:1786px;top:0;width:50px;height:50px;background:#eef0f3;border:1px solid #e0e3e7;border-bottom:none;z-index:4;"></div>
<div class="a" style="left:460px;top:0px;width:0px;height:0px;z-index:4;"></div>
<svg width="1920" height="861" viewBox="0 0 1920 861" style="z-index:4">
  <polyline points="1808,18.8 1815,25.2 1808,31.6" fill="none" stroke="#2e4a9a" stroke-width="2.6" stroke-linecap="round" stroke-linejoin="round"/>
  <!-- bell -->
  <path d="M1869.3,12.8 C1870.3,12.8 1870.8,13.6 1870.8,14.5 C1874.6,15.4 1876.5,18.5 1876.5,22.5 L1876.8,27.3 C1877.2,29.3 1879.5,30.9 1880.7,31.9 L1880.7,33.3 L1857.9,33.3 L1857.9,31.9 C1859.1,30.9 1861.4,29.3 1861.8,27.3 L1862.1,22.5 C1862.1,18.5 1864,15.4 1867.8,14.5 C1867.8,13.6 1868.3,12.8 1869.3,12.8 Z" fill="#3a86dc"/>
  <path d="M1866.1,33.6 A3.2,3.2 0 0 0 1872.5,33.6 Z" fill="#3a86dc"/>
  <circle cx="1892.5" cy="27.3" r="8.5" fill="#f40000"/>
  <text x="1892.6" y="31.3" font-size="12.6" fill="#fff" stroke="#fff" stroke-width="0.3" text-anchor="middle" font-family="Liberation Sans" textLength="7" lengthAdjust="spacingAndGlyphs">0</text>

  <!-- plus icons -->
  <defs>
    <g id="plus">
      <circle cx="0" cy="0" r="9.6" fill="#d9dcdf"/>
      <circle cx="0" cy="0" r="8.7" fill="#fff"/>
      <circle cx="0" cy="0" r="7.4" fill="#0d72d4"/>
      <path d="M-4.2,-0.9 L3.9,-0.9 M-0.15,-4.9 L-0.15,3.2" stroke="#f0fbff" stroke-width="1.4"/>
    </g>
  </defs>
  <g transform="translate(135.4,599.6)">
      <circle cx="0" cy="0" r="9.6" fill="#d9dcdf"/>
      <circle cx="0" cy="0" r="8.7" fill="#fff"/>
      <circle cx="0" cy="0" r="7.4" fill="#0d72d4"/>
      <path d="M-4.2,-0.9 L3.9,-0.9 M-0.15,-4.9 L-0.15,3.2" stroke="#f0fbff" stroke-width="1.4"/>
    </g>
  <g transform="translate(135.4,644.6)">
      <circle cx="0" cy="0" r="9.6" fill="#d9dcdf"/>
      <circle cx="0" cy="0" r="8.7" fill="#fff"/>
      <circle cx="0" cy="0" r="7.4" fill="#0d72d4"/>
      <path d="M-4.2,-0.9 L3.9,-0.9 M-0.15,-4.9 L-0.15,3.2" stroke="#f0fbff" stroke-width="1.4"/>
    </g>
  <g transform="translate(135.4,689.6)">
      <circle cx="0" cy="0" r="9.6" fill="#d9dcdf"/>
      <circle cx="0" cy="0" r="8.7" fill="#fff"/>
      <circle cx="0" cy="0" r="7.4" fill="#0d72d4"/>
      <path d="M-4.2,-0.9 L3.9,-0.9 M-0.15,-4.9 L-0.15,3.2" stroke="#f0fbff" stroke-width="1.4"/>
    </g>
  <g transform="translate(135.4,734.4)">
      <circle cx="0" cy="0" r="9.6" fill="#d9dcdf"/>
      <circle cx="0" cy="0" r="8.7" fill="#fff"/>
      <circle cx="0" cy="0" r="7.4" fill="#0d72d4"/>
      <path d="M-4.2,-0.9 L3.9,-0.9 M-0.15,-4.9 L-0.15,3.2" stroke="#f0fbff" stroke-width="1.4"/>
    </g>
  <g transform="translate(135.4,779)">
      <circle cx="0" cy="0" r="9.6" fill="#d9dcdf"/>
      <circle cx="0" cy="0" r="8.7" fill="#fff"/>
      <circle cx="0" cy="0" r="7.4" fill="#0d72d4"/>
      <path d="M-4.2,-0.9 L3.9,-0.9 M-0.15,-4.9 L-0.15,3.2" stroke="#f0fbff" stroke-width="1.4"/>
    </g>
  <g transform="translate(135.4,823.6)">
      <circle cx="0" cy="0" r="9.6" fill="#d9dcdf"/>
      <circle cx="0" cy="0" r="8.7" fill="#fff"/>
      <circle cx="0" cy="0" r="7.4" fill="#0d72d4"/>
      <path d="M-4.2,-0.9 L3.9,-0.9 M-0.15,-4.9 L-0.15,3.2" stroke="#f0fbff" stroke-width="1.4"/>
    </g>

  <!-- red border annotation -->
  <rect x="92" y="84" width="571" height="291" fill="none" stroke="#d03a40" stroke-width="2"/>

  <!-- floating buttons -->
  <defs>
    <filter id="fsh" x="-20%" y="-20%" width="140%" height="140%">
      <feDropShadow dx="0" dy="1" stdDeviation="1" flood-color="#000" flood-opacity="0.18"/>
    </filter>
  </defs>
  <path d="M1855,81 L1901.5,81 L1901.5,131 L1855,131 Q1851,131 1851,127 L1851,85 Q1851,81 1855,81Z" fill="#fff" filter="url(#fsh)"/>
  <path d="M1855,134 L1901.5,134 L1901.5,181 L1855,181 Q1851,181 1851,177 L1851,138 Q1851,134 1855,134Z" fill="#fff" filter="url(#fsh)"/>
  <path d="M1855,186 L1901.5,186 L1901.5,236 L1855,236 Q1851,236 1851,232 L1851,190 Q1851,186 1855,186Z" fill="#fff" filter="url(#fsh)"/>
  <!-- rss -->
  <circle cx="1867.1" cy="115.4" r="3.3" fill="#3a86dc"/>
  <path d="M1866.2,106.3 A10.8,10.8 0 0 1 1876.8,117" fill="none" stroke="#3a86dc" stroke-width="4" stroke-linecap="round"/>
  <path d="M1866.2,97.4 A19.6,19.6 0 0 1 1885.8,117" fill="none" stroke="#3a86dc" stroke-width="4" stroke-linecap="round"/>
  <!-- search -->
  <circle cx="1874.6" cy="156.4" r="9.3" fill="none" stroke="#3a86dc" stroke-width="3"/>
  <line x1="1881.5" y1="163.2" x2="1887.2" y2="169" stroke="#3a86dc" stroke-width="3" stroke-linecap="round"/>
  <!-- check -->
  <circle cx="1876.4" cy="211.5" r="12.5" fill="#3a86dc"/>
  <polyline points="1870,209.6 1876,215 1888,203.8" fill="none" stroke="#eef3fb" stroke-width="3.4" stroke-linecap="square"/>

  <!-- scrollbar -->
  <rect x="1913" y="50" width="1" height="426" fill="#f8fafc"/>
  <rect x="1914" y="50" width="6" height="426" fill="#676767"/>
  <rect x="1914" y="476" width="6" height="385" fill="#dcdcdc"/>
</svg>
</body>
</html>
